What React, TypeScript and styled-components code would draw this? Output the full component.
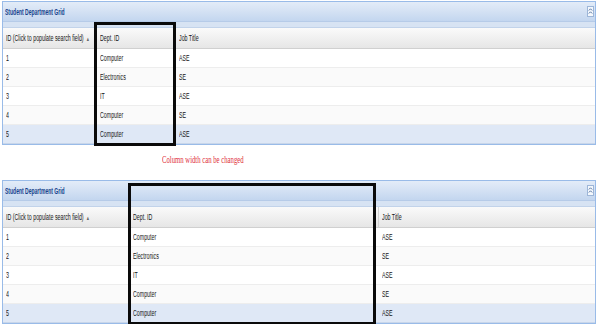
import React from 'react';
import styled, { createGlobalStyle } from 'styled-components';

const GlobalStyle = createGlobalStyle`
    body {
        margin: 0;
        background: #ffffff;
        font-family: "Liberation Sans", Arial, sans-serif;
    }
    *, *::before, *::after {
        box-sizing: border-box;
    }
`;

const Page = styled.div`
    width: 600px;
    padding-top: 1px;
`;

const Panel = styled.div`
    position: relative;
    margin-left: 2px;
    width: 594px;
    border: 1px solid #99bbe8;
`;

const PanelHeader = styled.div`
    height: 20px;
    display: flex;
    align-items: center;
    justify-content: space-between;
    padding: 0 1px 0 2px;
    background: linear-gradient(#e3ecf8, #d2e0f3 55%, #c3d6ef);
    border-bottom: 1px solid #b6cbe8;
`;

const Title = styled.span`
    display: inline-block;
    font-size: 8.5px;
    font-weight: bold;
    color: #15428b;
    transform: scaleX(0.59);
    transform-origin: left center;
    white-space: nowrap;
`;

const Band = styled.div`
    height: 6px;
    background: #d7e3f3;
    border-bottom: 1px solid #c2d3ea;
`;

const Row = styled.div<{ $cols: string; $alt?: boolean; $selected?: boolean }>`
    display: grid;
    grid-template-columns: ${(p) => p.$cols};
    height: 19px;
    align-items: center;
    border-bottom: 1px solid ${(p) => (p.$selected ? '#c8d6ea' : '#ededed')};
    background: ${(p) => (p.$selected ? '#dfe8f6' : p.$alt ? '#fafafa' : '#ffffff')};
`;

const HeaderRow = styled(Row)`
    height: 21px;
    background: linear-gradient(#fafafa, #eeeeee 60%, #e6e6e6);
    border-bottom: 1px solid #d0d0d0;
`;

const Cell = styled.div<{ $head?: boolean }>`
    height: 100%;
    display: flex;
    align-items: center;
    padding-left: 3px;
    min-width: 0;
    border-right: 1px solid ${(p) => (p.$head ? '#d0d0d0' : 'transparent')};
    &:last-child {
        border-right: none;
    }
`;

const Label = styled.span`
    display: inline-block;
    font-size: 8.5px;
    color: #151515;
    transform: scaleX(0.62);
    transform-origin: left center;
    white-space: nowrap;
`;

const SortArrow = styled.span`
    font-size: 6px;
    color: #666;
    margin-left: 4px;
`;

const Caption = styled.div`
    height: 35px;
    display: flex;
    align-items: center;
    padding: 0 0 8px 162px;
`;

const Note = styled.span`
    display: inline-block;
    font-family: "Liberation Serif", "Times New Roman", serif;
    font-size: 11px;
    color: #e0303c;
    transform: scaleX(0.61);
    transform-origin: left center;
    white-space: nowrap;
`;

const Highlight = styled.div<{ $left: number; $top: number; $w: number; $h: number }>`
    position: absolute;
    left: ${(p) => p.$left}px;
    top: ${(p) => p.$top}px;
    width: ${(p) => p.$w}px;
    height: ${(p) => p.$h}px;
    border: 3px solid #0a0a0a;
    pointer-events: none;
`;

const CollapseTool = () => (
    <svg width="7" height="11" viewBox="0 0 7 11">
        <rect x="0.5" y="0.5" width="6" height="10" fill="#f4f8fd" stroke="#9db6d8" />
        <path d="M1.8 4.5 L3.5 2.8 L5.2 4.5 M1.8 7.5 L3.5 5.8 L5.2 7.5" fill="none" stroke="#4a6a98" strokeWidth="0.9" />
    </svg>
);

const rows = [
    { id: '1', dept: 'Computer', job: 'ASE' },
    { id: '2', dept: 'Electronics', job: 'SE' },
    { id: '3', dept: 'IT', job: 'ASE' },
    { id: '4', dept: 'Computer', job: 'SE' },
    { id: '5', dept: 'Computer', job: 'ASE' },
];

type GridProps = {
    cols: string;
    box: { left: number; top: number; w: number; h: number };
};

function Grid({ cols, box }: GridProps) {
    return (
        <Panel>
            <PanelHeader>
                <Title>Student Department Grid</Title>
                <CollapseTool />
            </PanelHeader>
            <Band />
            <HeaderRow $cols={cols}>
                <Cell $head>
                    <Label>
                        ID (Click to populate search field)<SortArrow>▲</SortArrow>
                    </Label>
                </Cell>
                <Cell $head>
                    <Label>Dept. ID</Label>
                </Cell>
                <Cell $head>
                    <Label>Job Title</Label>
                </Cell>
            </HeaderRow>
            {rows.map((r, i) => (
                <Row key={r.id} $cols={cols} $alt={i % 2 === 1} $selected={i === 4}>
                    <Cell><Label>{r.id}</Label></Cell>
                    <Cell><Label>{r.dept}</Label></Cell>
                    <Cell><Label>{r.job}</Label></Cell>
                </Row>
            ))}
            <Highlight $left={box.left} $top={box.top} $w={box.w} $h={box.h} />
        </Panel>
    );
}

export default function App() {
    return (
        <Page>
            <GlobalStyle />
            <Grid cols="94px 79px 1fr" box={{ left: 91, top: 20, w: 82, h: 124 }} />
            <Caption>
                <Note>Column width can be changed</Note>
            </Caption>
            <Grid cols="127px 249px 1fr" box={{ left: 125, top: 2, w: 248, h: 142 }} />
        </Page>
    );
}
